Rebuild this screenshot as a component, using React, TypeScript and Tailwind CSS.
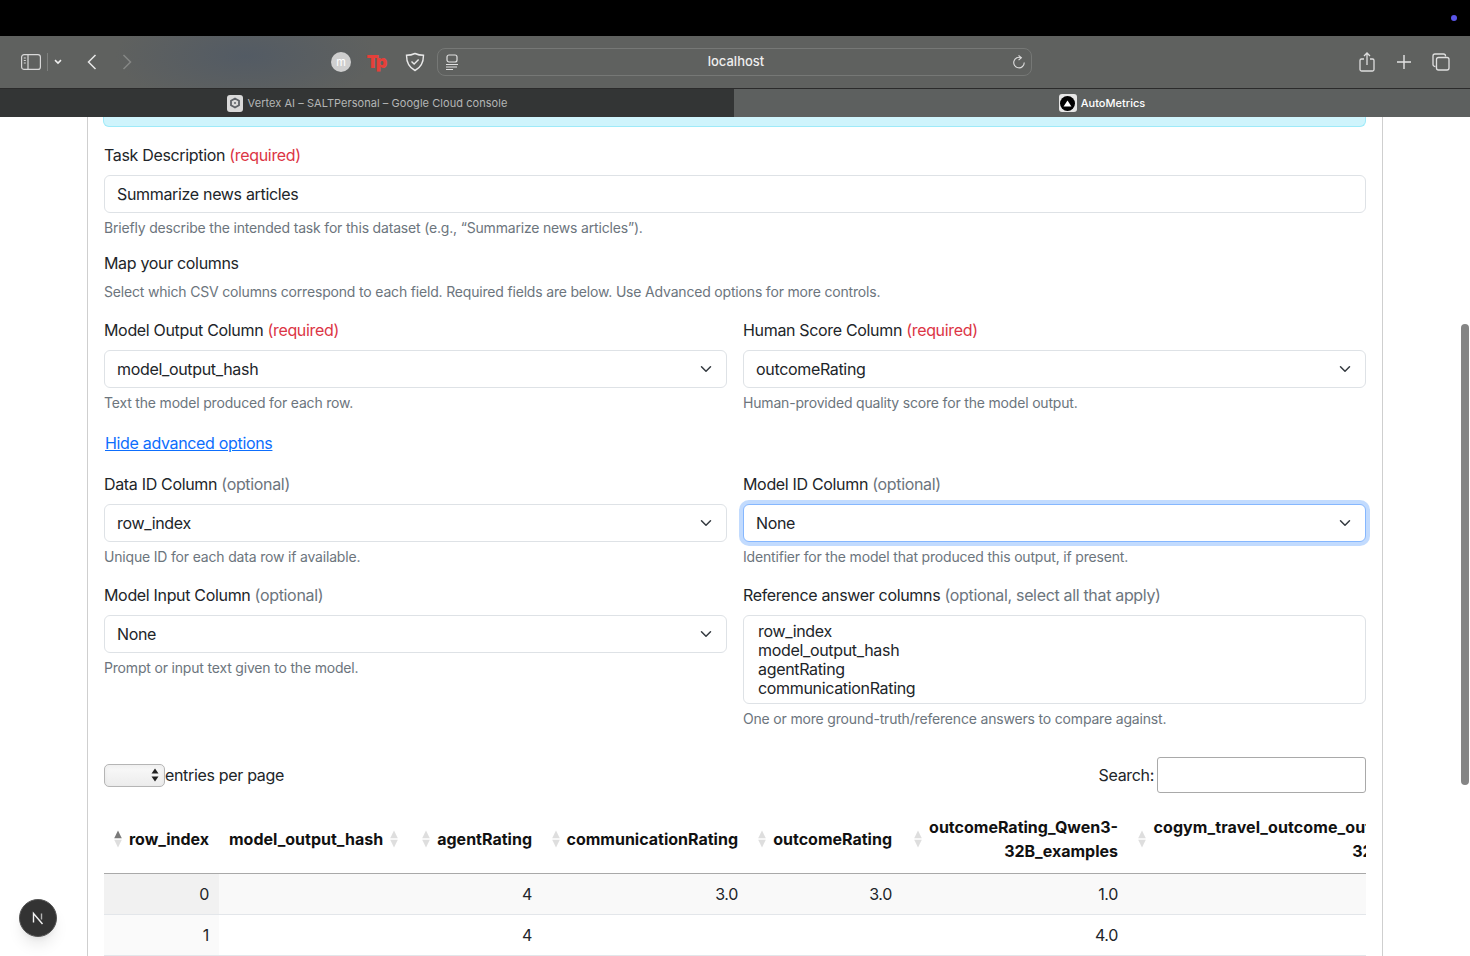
const Chevron = () => (
    <svg viewBox="0 0 16 16" className="w-3 h-3 shrink-0" fill="none" stroke="#343a40" strokeWidth="2" strokeLinecap="round" strokeLinejoin="round">
        <path d="M2 5l6 6 6-6" />
    </svg>
);

function Sort({ active = false }: { active?: boolean }) {
    return (
        <svg viewBox="0 0 8 18" className="w-2 h-[18px] shrink-0">
            <path d="M4 0.500L7.800 8.300H0.200z" fill={active ? '#7a7a7a' : '#dedede'} />
            <path d="M4 17.500L7.800 9.700H0.200z" fill="#dedede" />
        </svg>
    );
}

function Label({ name, note, required = false }: { name: string; note: string; required?: boolean }) {
    return (
        <p className="h-6 leading-6 mb-2 text-[#212529]">
            {name} <span className={required ? 'text-[#dc3545]' : 'text-[#6c757d]'}>{note}</span>
        </p>
    );
}

function Help({ children }: { children: string }) {
    return <p className="mt-1 h-[21px] leading-[21px] text-sm tracking-[-0.18px] text-[#6c757d]">{children}</p>;
}

function SelectBox({ value, focused = false }: { value: string; focused?: boolean }) {
    return (
        <div
            className={`h-[38px] flex items-center justify-between pl-3 pr-[14px] rounded-md border bg-white text-[#212529] ${
                focused ? 'border-[#86b7fe] ring-4 ring-[#0d6efd]/25' : 'border-[#dee2e6]'
            }`}
        >
            <span>{value}</span>
            <Chevron />
        </div>
    );
}

function SelectField(props: { name: string; note: string; required?: boolean; value: string; help: string; focused?: boolean }) {
    return (
        <div>
            <Label name={props.name} note={props.note} required={props.required} />
            <SelectBox value={props.value} focused={props.focused} />
            <Help>{props.help}</Help>
        </div>
    );
}

function Th({ children, left = false, active = false }: { children: React.ReactNode; left?: boolean; active?: boolean }) {
    return (
        <th className="px-[10px] py-2 font-bold tracking-normal text-[#111] border-b border-[#a9a9a9] align-middle">
            <div className={`flex items-center gap-[7px] ${left ? 'justify-start' : 'justify-end text-right'}`}>
                {!left && <Sort active={active} />}
                <span className={left ? '' : 'whitespace-nowrap'}>{children}</span>
                {left && <Sort />}
            </div>
        </th>
    );
}

function BrowserChrome() {
    return (
        <div className="shrink-0 tracking-normal">
            <div className="h-9 bg-black flex items-center justify-end pr-[13px]">
                <span className="w-[6px] h-[6px] rounded-full bg-[#5a55e8]" />
            </div>
            <div className="h-[52px] flex items-center bg-[#5f615f] bg-[radial-gradient(ellipse_130px_50px_at_245px_20px,#535b64,transparent)] text-[#e4e4e4]">
                <svg viewBox="0 0 20 16" className="w-5 h-4 ml-[21px]" fill="none" stroke="#d8d8d8" strokeWidth="1.2">
                    <rect x="0.6" y="0.6" width="18.8" height="14.8" rx="2.5" />
                    <path d="M7 0.6v14.8M2.8 4h2M2.8 6.5h2M2.8 9h2" />
                </svg>
                <span className="w-px h-[18px] bg-[#7d7f7d] ml-[6px]" />
                <svg viewBox="0 0 10 8" className="w-[8px] h-[6px] ml-[6px]" fill="none" stroke="#eee" strokeWidth="2">
                    <path d="M1 1.5l4 4 4-4" />
                </svg>
                <svg viewBox="0 0 10 16" className="w-[10px] h-4 ml-[25px]" fill="none" stroke="#e8e8e8" strokeWidth="1.5">
                    <path d="M8.500 1L1.500 8l7 7" />
                </svg>
                <svg viewBox="0 0 10 16" className="w-[10px] h-4 ml-[25px]" fill="none" stroke="#858785" strokeWidth="1.5">
                    <path d="M1.500 1l7 7-7 7" />
                </svg>
                <span className="w-5 h-5 ml-[199px] rounded-full bg-[#cfcfcf] text-white text-[11px] leading-5 text-center">m</span>
                <span className="w-5 ml-[15px] mr-[2px] text-[#e5403a] text-[18px] leading-5 font-black tracking-[-2px] text-center">Tp</span>
                <svg viewBox="0 0 20 20" className="w-5 h-5 ml-[17px]" fill="none" stroke="#e8e8e8" strokeWidth="1.4">
                    <path d="M10 1.500c3 1.400 5.600 1.800 8.500 1.800 0 7-2 12-8.500 15.200C3.500 15.300 1.500 10.300 1.500 3.300c2.900 0 5.500-.4 8.500-1.800z" />
                    <path d="M6.500 9.500l2.600 2.600 4.500-4.600" />
                </svg>
                <div className="w-[595px] h-7 ml-3 flex items-center rounded-lg border border-[#767876] pl-[7px] pr-[5px]">
                    <svg viewBox="0 0 14 16" className="w-[14px] h-4" fill="none" stroke="#e0e0e0" strokeWidth="1.2">
                        <rect x="2" y="1" width="10" height="7" rx="2" />
                        <path d="M1 10.500h12M1 13h11M1 15.500h7" />
                    </svg>
                    <span className="flex-1 text-center text-[13px] font-medium text-[#eeeeee] pl-[1px]">localhost</span>
                    <svg viewBox="0 0 16 16" className="w-[14px] h-[14px]" fill="none" stroke="#dcdcdc" strokeWidth="1.3">
                        <path d="M10.500 3.200A6 6 0 1 0 14 8.500" />
                        <path d="M7.500 0.500l3.200 2.700-3.200 2.700" />
                    </svg>
                </div>
                <svg viewBox="0 0 16 20" className="w-4 h-5 ml-[327px]" fill="none" stroke="#dedede" strokeWidth="1.3">
                    <path d="M5 7H2.500A1.500 1.500 0 0 0 1 8.500v9A1.500 1.500 0 0 0 2.500 19h11a1.500 1.500 0 0 0 1.500-1.500v-9A1.500 1.500 0 0 0 13.500 7H11" />
                    <path d="M8 13V1M5 4l3-3 3 3" />
                </svg>
                <svg viewBox="0 0 14 14" className="w-[14px] h-[14px] ml-[22px]" fill="none" stroke="#e4e4e4" strokeWidth="1.400">
                    <path d="M7 0v14M0 7h14" />
                </svg>
                <svg viewBox="0 0 18 18" className="w-[18px] h-[18px] ml-[21px]" fill="none" stroke="#e0e0e0" strokeWidth="1.300">
                    <path d="M3.500 13.500H3A2 2 0 0 1 1 11.500V3a2 2 0 0 1 2-2h8.500a2 2 0 0 1 2 2v.500" />
                    <rect x="4.500" y="4.500" width="12.500" height="12.500" rx="2" />
                </svg>
            </div>
            <div className="h-[29px] flex text-[11px] border-t border-[#2b2b2b]">
                <div className="w-[734px] flex items-center justify-center gap-[5px] bg-[#333535] text-[#b3b5b5] tracking-[0.05px]">
                    <span className="w-4 h-[17px] rounded-[3px] bg-[#d9d9d9] flex items-center justify-center">
                        <svg viewBox="0 0 12 12" className="w-3 h-3" fill="none" stroke="#5f6368" strokeWidth="1.800">
                            <path d="M6 1.500l4 2.300v4.400l-4 2.300-4-2.300V3.800z" />
                            <circle cx="6" cy="6" r="1" fill="#5f6368" stroke="none" />
                        </svg>
                    </span>
                    <span>Vertex AI – SALTPersonal – Google Cloud console</span>
                </div>
                <div className="flex-1 flex items-center justify-center gap-1 bg-[#5d605f] text-white font-medium">
                    <span className="w-[18px] h-[18px] rounded-[3px] bg-[#e6e6e6] flex items-center justify-center">
                        <span className="w-[15px] h-[15px] rounded-full bg-black flex items-center justify-center">
                            <svg viewBox="0 0 10 8" className="w-[9px] h-[7px]">
                                <path d="M5 0.500L9.500 7.500H0.500z" fill="#fff" />
                            </svg>
                        </span>
                    </span>
                    <span>AutoMetrics</span>
                </div>
            </div>
        </div>
    );
}

export default function App() {
    return (
        <div className="relative w-[1470px] h-[956px] overflow-hidden flex flex-col bg-white text-base tracking-[-0.33px] text-[#212529] [font-family:Inter,sans-serif]">
            <BrowserChrome />

            <main className="flex-1 min-h-0 overflow-hidden ml-[87px] w-[1296px] border-x border-[#cfcfcf] pl-4 pr-4">
                {/* Info alert, scrolled mostly out of view */}
                <div className="h-[10px] -ml-px bg-[#cff4fc] border border-t-0 border-[#9eeaf9] rounded-b-md" />

                <div className="mt-4">
                    <Label name="Task Description" note="(required)" required />
                    <div className="h-[38px] flex items-center pl-3 rounded-md border border-[#dee2e6]">Summarize news articles</div>
                    <Help>Briefly describe the intended task for this dataset (e.g., “Summarize news articles”).</Help>
                </div>

                <h2 className="mt-[13px] h-6 leading-6">Map your columns</h2>
                <p className="mt-[6px] h-[21px] leading-[21px] text-sm tracking-[-0.18px] text-[#6c757d]">
                    Select which CSV columns correspond to each field. Required fields are below. Use Advanced options for more controls.
                </p>

                <div className="mt-[16px] grid grid-cols-2 gap-x-4">
                    <SelectField name="Model Output Column" note="(required)" required value="model_output_hash" help="Text the model produced for each row." />
                    <SelectField name="Human Score Column" note="(required)" required value="outcomeRating" help="Human-provided quality score for the model output." />
                </div>

                <a className="block mt-[18px] ml-px h-6 leading-6 text-[#0d6efd] underline">Hide advanced options</a>

                <div className="mt-[17px] grid grid-cols-2 gap-x-4">
                    <div>
                        <SelectField name="Data ID Column" note="(optional)" value="row_index" help="Unique ID for each data row if available." />
                        <div className="mt-[16px]">
                            <SelectField name="Model Input Column" note="(optional)" value="None" help="Prompt or input text given to the model." />
                        </div>
                    </div>
                    <div>
                        <SelectField name="Model ID Column" note="(optional)" value="None" help="Identifier for the model that produced this output, if present." focused />
                        <div className="mt-[16px]">
                            <Label name="Reference answer columns" note="(optional, select all that apply)" />
                            <div className="h-[89px] pt-[6px] pl-[14px] rounded-md border border-[#dee2e6] leading-[19px]">
                                <div>row_index</div>
                                <div>model_output_hash</div>
                                <div>agentRating</div>
                                <div>communicationRating</div>
                            </div>
                            <Help>One or more ground-truth/reference answers to compare against.</Help>
                        </div>
                    </div>
                </div>

                {/* DataTable controls */}
                <div className="mt-[28px] h-9 flex items-center justify-between">
                    <div className="flex items-center">
                        <div className="w-[61px] h-[23px] flex items-center justify-end pr-[5px] rounded-[5px] border border-[#b5b5b5] bg-gradient-to-b from-[#fafafa] to-[#ececec] shadow-inner">
                            <svg viewBox="0 0 8 14" className="w-2 h-[14px]">
                                <path d="M4 0.500L7.500 5.500H0.500z" fill="#222" />
                                <path d="M4 13.500L7.500 8.500H0.500z" fill="#222" />
                            </svg>
                        </div>
                        <span>entries per page</span>
                    </div>
                    <div className="flex items-center gap-[3px]">
                        <span>Search:</span>
                        <div className="w-[209px] h-9 rounded-[3px] border border-[#a9a9a9]" />
                    </div>
                </div>

                {/* DataTable */}
                <div className="mt-[13px] overflow-hidden">
                    <table className="table-fixed border-collapse w-[1372px]">
                        <colgroup>
                            <col className="w-[115px]" />
                            <col className="w-[186px]" />
                            <col className="w-[137px]" />
                            <col className="w-[206px]" />
                            <col className="w-[154px]" />
                            <col className="w-[226px]" />
                            <col className="w-[348px]" />
                        </colgroup>
                        <thead>
                            <tr className="h-[67px]">
                                <Th active>row_index</Th>
                                <Th left>model_output_hash</Th>
                                <Th>agentRating</Th>
                                <Th>communicationRating</Th>
                                <Th>outcomeRating</Th>
                                <Th>
                                    outcomeRating_Qwen3-
                                    <br />
                                    32B_examples
                                </Th>
                                <Th>
                                    <span className="tracking-[0.09px]">cogym_travel_outcome_outcome_Qw3-</span>
                                    <br />
                                    32B_examples
                                </Th>
                            </tr>
                        </thead>
                        <tbody className="text-right">
                            <tr className="h-[41px] bg-[#f9f9f9] border-b border-[#e3e6ea]">
                                <td className="px-[10px] bg-[#f1f1f1]">0</td>
                                <td />
                                <td className="px-[10px]">4</td>
                                <td className="px-[10px]">3.0</td>
                                <td className="px-[10px]">3.0</td>
                                <td className="px-[10px]">1.0</td>
                                <td />
                            </tr>
                            <tr className="h-[41px] border-b border-[#e3e6ea]">
                                <td className="px-[10px] bg-[#fafafa]">1</td>
                                <td />
                                <td className="px-[10px]">4</td>
                                <td />
                                <td />
                                <td className="px-[10px]">4.0</td>
                                <td />
                            </tr>
                        </tbody>
                    </table>
                </div>
            </main>

            {/* Overlay scrollbar */}
            <div className="absolute left-[1461px] top-[324px] w-2 h-[461px] rounded-full bg-[#858585]" />

            {/* Next.js dev badge */}
            <div className="absolute left-[19px] top-[899px] w-[38px] h-[38px] rounded-full bg-[#333] border border-[#555] shadow-lg flex items-center justify-center">
                <svg viewBox="0 0 16 16" className="w-4 h-4" fill="none" strokeWidth="1.400">
                    <path d="M3.500 12.500v-9L12.500 14" stroke="#f2f2f2" />
                    <path d="M11.500 3.500v6" stroke="#b5b5b5" />
                </svg>
            </div>
        </div>
    );
}
